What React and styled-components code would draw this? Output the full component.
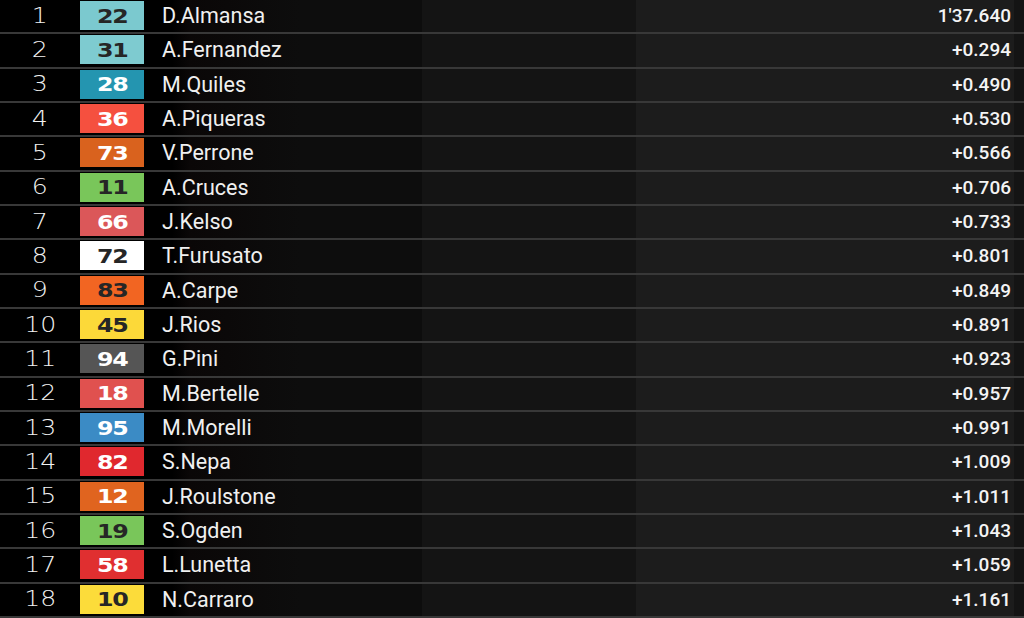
import React from "react";
import styled, { createGlobalStyle } from "styled-components";

const GlobalStyle = createGlobalStyle`
  html, body {
    margin: 0;
    padding: 0;
    background: #000;
  }
  #root {
    height: 618px;
  }
`;

const Board = styled.div`
  height: 618px;
  width: 1024px;
  display: flex;
  flex-direction: column;
  overflow: hidden;
  background: linear-gradient(
    to right,
    #000 0px,
    #000 172px,
    #0a0707 190px,
    #0d0d0d 300px,
    #0d0d0d 422px,
    #141414 422px,
    #141414 636px,
    #1c1c1c 636px,
    #1c1c1c 1014px,
    #141414 1014px
  );
`;

const Row = styled.div`
  flex: 1;
  display: flex;
  align-items: center;
  border-bottom: 2px solid #383838;
  box-sizing: border-box;
  padding-bottom: 1px;
`;

const Pos = styled.div`
  width: 80px;
  display: flex;
  justify-content: center;
  color: #f2f2f2;
  font-family: "DejaVu Sans", sans-serif;
  font-weight: 200;
  font-size: 21px;

  span {
    display: inline-block;
    transform: scaleX(1.2);
  }
`;

const Badge = styled.div`
  width: 64px;
  height: 29px;
  box-sizing: border-box;
  display: flex;
  align-items: center;
  justify-content: center;
  background: ${(p) => p.$bg};
  color: ${(p) => (p.$dark ? "#262626" : "#ffffff")};
  font-family: "DejaVu Sans", sans-serif;
  font-weight: 700;
  font-size: 19px;
  letter-spacing: -1px;

  span {
    display: inline-block;
    transform: scaleX(1.25);
  }
`;

const Name = styled.div`
  margin-left: 18px;
  flex: 1;
  color: #f0f0f0;
  font-family: Roboto, "Liberation Sans", sans-serif;
  font-size: 21.5px;
  font-weight: 400;
`;

const Time = styled.div`
  width: 200px;
  padding-right: 13px;
  text-align: right;
  color: #f4f4f4;
  font-family: Roboto, "Liberation Sans", sans-serif;
  font-size: 19px;
  font-weight: 500;
`;

const results = [
  { pos: 1, num: 22, bg: "#7bc9cf", dark: true, name: "D.Almansa", time: "1'37.640" },
  { pos: 2, num: 31, bg: "#7ecbd0", dark: true, name: "A.Fernandez", time: "+0.294" },
  { pos: 3, num: 28, bg: "#2495b0", dark: false, name: "M.Quiles", time: "+0.490" },
  { pos: 4, num: 36, bg: "#f5503f", dark: false, name: "A.Piqueras", time: "+0.530" },
  { pos: 5, num: 73, bg: "#d9621e", dark: false, name: "V.Perrone", time: "+0.566" },
  { pos: 6, num: 11, bg: "#79c65a", dark: true, name: "A.Cruces", time: "+0.706" },
  { pos: 7, num: 66, bg: "#db5759", dark: false, name: "J.Kelso", time: "+0.733" },
  { pos: 8, num: 72, bg: "#ffffff", dark: true, name: "T.Furusato", time: "+0.801" },
  { pos: 9, num: 83, bg: "#f26522", dark: true, name: "A.Carpe", time: "+0.849" },
  { pos: 10, num: 45, bg: "#fcd939", dark: true, name: "J.Rios", time: "+0.891" },
  { pos: 11, num: 94, bg: "#555555", dark: false, name: "G.Pini", time: "+0.923" },
  { pos: 12, num: 18, bg: "#e0514f", dark: false, name: "M.Bertelle", time: "+0.957" },
  { pos: 13, num: 95, bg: "#3b8bc5", dark: false, name: "M.Morelli", time: "+0.991" },
  { pos: 14, num: 82, bg: "#e0282e", dark: false, name: "S.Nepa", time: "+1.009" },
  { pos: 15, num: 12, bg: "#e0641f", dark: false, name: "J.Roulstone", time: "+1.011" },
  { pos: 16, num: 19, bg: "#79c65a", dark: true, name: "S.Ogden", time: "+1.043" },
  { pos: 17, num: 58, bg: "#e02f30", dark: false, name: "L.Lunetta", time: "+1.059" },
  { pos: 18, num: 10, bg: "#fcdc3a", dark: true, name: "N.Carraro", time: "+1.161" },
];

const App = () => {
  return (
    <>
      <GlobalStyle />
      <Board>
        {results.map((r) => (
          <Row key={r.pos}>
            <Pos>
              <span>{r.pos}</span>
            </Pos>
            <Badge $bg={r.bg} $dark={r.dark}>
              <span>{r.num}</span>
            </Badge>
            <Name>{r.name}</Name>
            <Time>{r.time}</Time>
          </Row>
        ))}
      </Board>
    </>
  );
};

export default App;
